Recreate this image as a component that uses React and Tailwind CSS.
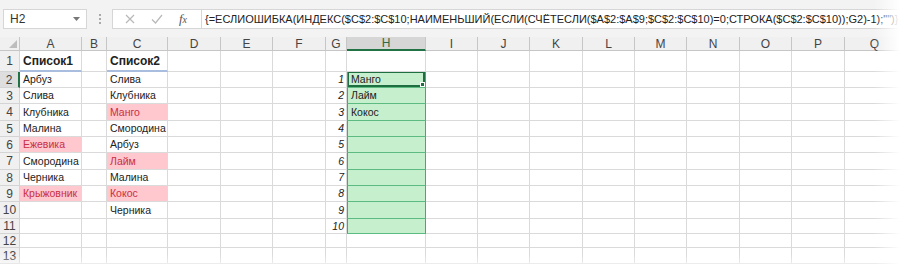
import React from "react";

const COLS = ["A", "B", "C", "D", "E", "F", "G", "H", "I", "J", "K", "L", "M", "N", "O", "P", "Q"];
const GRID =
  "grid grid-cols-[20px_62px_25px_61px_53px_52px_53px_21px_79px_52px_52px_53px_52px_52px_53px_52px_53px_60px]";

const listA = {
  1: "Список1",
  2: "Арбуз",
  3: "Слива",
  4: "Клубника",
  5: "Малина",
  6: "Ежевика",
  7: "Смородина",
  8: "Черника",
  9: "Крыжовник",
};
const listC = {
  1: "Список2",
  2: "Слива",
  3: "Клубника",
  4: "Манго",
  5: "Смородина",
  6: "Арбуз",
  7: "Лайм",
  8: "Малина",
  9: "Кокос",
  10: "Черника",
};
const redA = [6, 9];
const redC = [4, 7, 9];
const result = { 2: "Манго", 3: "Лайм", 4: "Кокос" };

// row heights, 1..13
const rows = [
  { n: 1, h: "h-[21px]" },
  { n: 2, h: "h-[16px]" },
  { n: 3, h: "h-[16px]" },
  { n: 4, h: "h-[17px]" },
  { n: 5, h: "h-[16px]" },
  { n: 6, h: "h-[16px]" },
  { n: 7, h: "h-[17px]" },
  { n: 8, h: "h-[16px]" },
  { n: 9, h: "h-[16px]" },
  { n: 10, h: "h-[17px]" },
  { n: 11, h: "h-[15px]" },
  { n: 12, h: "h-[14px]" },
  { n: 13, h: "h-[16px]" },
];

const base =
  "relative flex items-center overflow-hidden whitespace-nowrap border-r border-b border-[#dadada] px-[3px] text-[10.5px] leading-none text-[#222]";

function Cell({ row, col }) {
  if (col === "A" || col === "C") {
    const list = col === "A" ? listA : listC;
    const red = col === "A" ? redA : redC;
    const text = list[row];
    if (row === 1) {
      return (
        <div className={`${base} font-bold text-[12px] text-[#3d4a5e] border-b-2 border-b-[#a9bddf]`}>
          {text}
        </div>
      );
    }
    if (red.includes(row)) {
      return <div className={`${base} bg-[#ffc7ce] text-[#c92f45]`}>{text}</div>;
    }
    return <div className={base}>{text}</div>;
  }

  if (col === "G" && row >= 2 && row <= 11) {
    return (
      <div className={`${base} justify-end pr-[2px] italic text-[#8a8a8a]`}>{row - 1}</div>
    );
  }

  if (col === "H" && row >= 2 && row <= 11) {
    return (
      <div
        className={`${base} bg-[#c6efce] text-[#1c6a33] border-l border-l-[#3fae6a] border-r-[#3fae6a] border-b-[#5bbb80]`}
      >
        {result[row]}
        {row === 2 && (
          <>
            <div className="pointer-events-none absolute -left-[1px] -top-[1px] right-0 bottom-0 border-2 border-[#1e6e41]" />
            <div className="absolute right-0 bottom-0 h-[5px] w-[5px] bg-[#1e6e41] border border-white" />
          </>
        )}
      </div>
    );
  }

  return <div className={base} />;
}

function RowHeader({ n }) {
  const active = n === 2;
  return (
    <div
      className={`flex items-center justify-center overflow-hidden border-b border-r text-[12px] leading-none text-[#444] ${
        active ? "bg-[#dedede] border-r-2 border-r-[#217346] border-b-[#d4d4d4]" : "bg-[#f0f0f0] border-[#d4d4d4]"
      }`}
    >
      {n}
    </div>
  );
}

export default function App() {
  return (
    <div className="relative flex h-[264px] w-[900px] flex-col overflow-hidden bg-white font-['Liberation_Sans',Arial,sans-serif]">
      {/* formula bar */}
      <div className="flex h-[37px] shrink-0 items-start bg-[#f3f3f3] pt-[9px] pl-[3px]">
        <div className="flex h-[20px] w-[84px] items-center justify-between border border-[#d6d6d6] bg-white px-[6px]">
          <span className="text-[12px] text-[#333]">H2</span>
          <svg width="7" height="4" viewBox="0 0 7 4">
            <path d="M0 0h7L3.5 4z" fill="#777" />
          </svg>
        </div>
        <div className="flex w-[25px] flex-col items-center justify-center gap-[2px] pt-[5px]">
          <span className="h-[2px] w-[2px] bg-[#aaa]" />
          <span className="h-[2px] w-[2px] bg-[#aaa]" />
          <span className="h-[2px] w-[2px] bg-[#aaa]" />
        </div>
        <div className="flex h-[20px] flex-1 items-center border border-r-0 border-[#d6d6d6] bg-white">
          <div className="flex w-[88px] items-center justify-around pl-[4px] pr-[6px]">
            <svg width="10" height="10" viewBox="0 0 10 10">
              <path d="M1 1l8 8M9 1l-8 8" stroke="#b8b8b8" strokeWidth="1.2" />
            </svg>
            <svg width="12" height="10" viewBox="0 0 12 10">
              <path d="M1 5.5l3.5 3.5L11 1" stroke="#b8b8b8" strokeWidth="1.2" fill="none" />
            </svg>
            <span className="font-['Liberation_Serif',serif] text-[13px] italic text-[#555]">
              f<span className="text-[10px]">x</span>
            </span>
          </div>
          <div className="flex h-full items-center border-l border-[#d6d6d6] pl-[3px] text-[11px] text-[#222] whitespace-nowrap">
            {'{=ЕСЛИОШИБКА(ИНДЕКС($C$2:$C$10;НАИМЕНЬШИЙ(ЕСЛИ(СЧЁТЕСЛИ($A$2:$A$9;$C$2:$C$10)=0;СТРОКА($C$2:$C$10));G2)-1);"")}'}
          </div>
        </div>
      </div>

      {/* column headers */}
      <div className={`${GRID} h-[14px] shrink-0 bg-[#f0f0f0]`}>
        <div className="relative border-r border-b border-[#c6c6c6]">
          <svg className="absolute bottom-[2px] right-[2px]" width="8" height="8" viewBox="0 0 8 8">
            <path d="M8 0v8H0z" fill="#bdbdbd" />
          </svg>
        </div>
        {COLS.map((c) => (
          <div
            key={c}
            className={`flex items-center justify-center border-r text-[12px] leading-none ${
              c === "H"
                ? "bg-[#d6d6d6] text-[#2f6a45] border-b-2 border-b-[#217346] border-r-[#c6c6c6]"
                : "text-[#444] border-b border-[#c6c6c6]"
            }`}
          >
            {c}
          </div>
        ))}
      </div>

      {/* sheet */}
      {rows.map((r) => (
        <div key={r.n} className={`${GRID} ${r.h} shrink-0`}>
          <RowHeader n={r.n} />
          {COLS.map((c) => (
            <Cell key={c} row={r.n} col={c} />
          ))}
        </div>
      ))}

      {/* soft page fade on right and bottom */}
      <div className="pointer-events-none absolute right-0 top-0 h-full w-[26px] bg-linear-to-r from-white/0 to-white" />
      <div className="pointer-events-none absolute bottom-0 left-0 h-[10px] w-full bg-linear-to-b from-white/0 to-white/50" />
    </div>
  );
}
